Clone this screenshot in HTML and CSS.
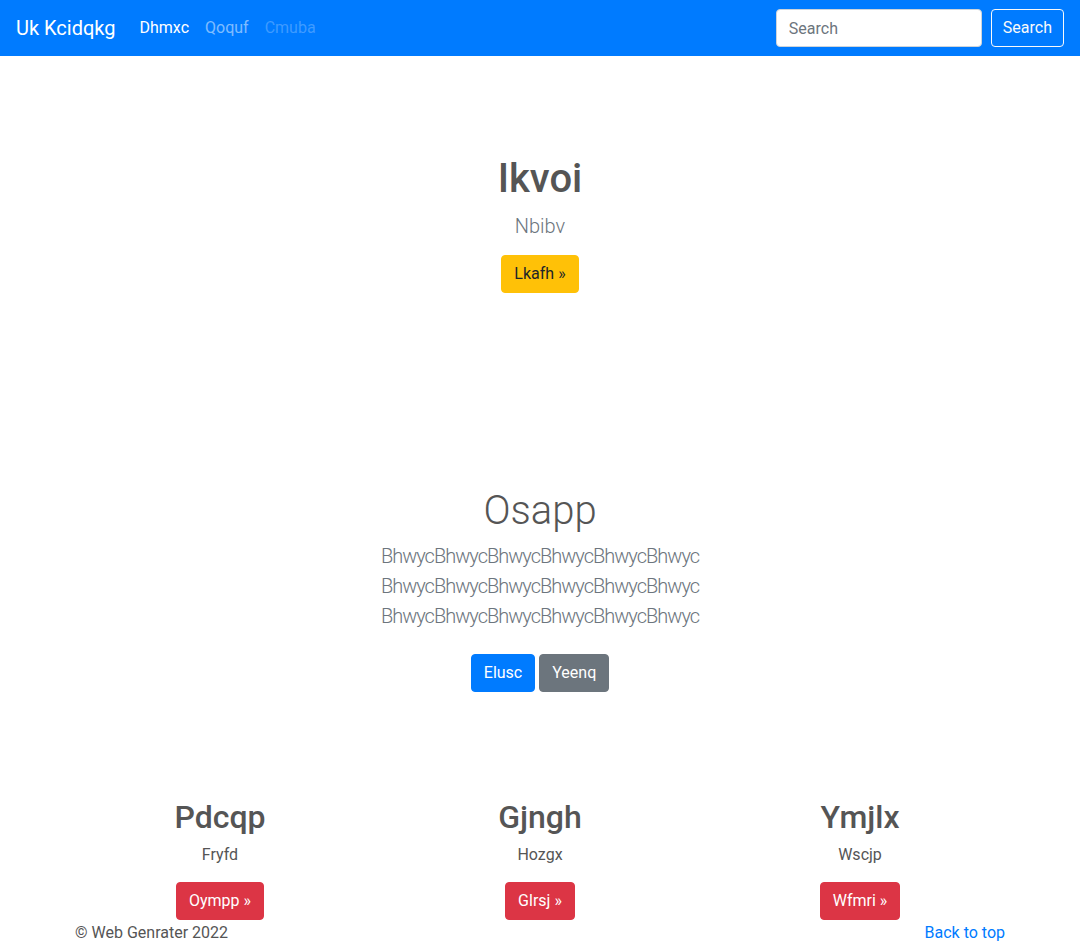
FILE: index.html
```html
<!DOCTYPE html>
<html lang="en">
<head>
<meta charset="utf-8">
<title>Uk Kcidqkg</title>
<link rel="stylesheet" href="styles.css">
</head>
<body>
<nav class="navbar">
  <a class="brand" href="#">Uk Kcidqkg</a>
  <ul class="nav">
    <li><a class="nav-link active" href="#">Dhmxc</a></li>
    <li><a class="nav-link" href="#">Qoquf</a></li>
    <li><a class="nav-link disabled" href="#">Cmuba</a></li>
  </ul>
  <form class="search">
    <input class="search-input" type="text" placeholder="Search">
    <button class="btn btn-outline-light" type="button">Search</button>
  </form>
</nav>

<main>
  <section class="hero">
    <h1 class="hero-title">Ikvoi</h1>
    <p class="lead">Nbibv</p>
    <a class="btn btn-warning" href="#">Lkafh »</a>
  </section>

  <section class="intro">
    <h1 class="intro-title">Osapp</h1>
    <p class="lead intro-lead">BhwycBhwycBhwycBhwycBhwycBhwyc<br>BhwycBhwycBhwycBhwycBhwycBhwyc<br>BhwycBhwycBhwycBhwycBhwycBhwyc</p>
    <div class="btn-row">
      <a class="btn btn-primary" href="#">Elusc</a>
      <a class="btn btn-secondary" href="#">Yeenq</a>
    </div>
  </section>

  <section class="container cols">
    <div class="col">
      <h2>Pdcqp</h2>
      <p>Fryfd</p>
      <a class="btn btn-danger" href="#">Oympp »</a>
    </div>
    <div class="col">
      <h2>Gjngh</h2>
      <p>Hozgx</p>
      <a class="btn btn-danger" href="#">Glrsj »</a>
    </div>
    <div class="col">
      <h2>Ymjlx</h2>
      <p>Wscjp</p>
      <a class="btn btn-danger" href="#">Wfmri »</a>
    </div>
  </section>
</main>

<footer class="container footer">
  <p>© Web Genrater 2022</p>
  <a href="#">Back to top</a>
</footer>
</body>
</html>
```

FILE: styles.css
```css
* { box-sizing: border-box; }

body {
  margin: 0;
  font-family: Roboto, "Liberation Sans", sans-serif;
  font-size: 16px;
  line-height: 1.5;
  color: #555;
  background: #fff;
}

a { text-decoration: none; }

.navbar {
  height: 56px;
  background: #007bff;
  display: flex;
  align-items: center;
  padding: 0 16px;
}

.brand {
  color: #fff;
  font-size: 20px;
  line-height: 30px;
  margin-right: 16px;
}

.nav {
  list-style: none;
  margin: 0;
  padding: 0;
  display: flex;
  flex: 1;
}

.nav-link {
  display: block;
  padding: 8px;
  color: rgba(255, 255, 255, 0.5);
}
.nav-link.active { color: #fff; }
.nav-link.disabled { color: rgba(255, 255, 255, 0.25); }

.search {
  display: flex;
  align-items: center;
  gap: 9px;
}

.search-input {
  width: 206px;
  height: 38px;
  padding: 6px 12px;
  font: inherit;
  color: #495057;
  border: 1px solid #ced4da;
  border-radius: 4px;
  background: #fff;
}
.search-input::placeholder { color: #6c757d; }

.search .btn { padding: 6px 11px; }

.btn {
  display: inline-block;
  padding: 6px 12px;
  font: inherit;
  font-size: 16px;
  line-height: 24px;
  border: 1px solid transparent;
  border-radius: 4px;
  cursor: pointer;
  text-align: center;
}

.btn-outline-light { color: #f8f9fa; border-color: #f8f9fa; background: transparent; }
.btn-warning { color: #212529; background: #ffc107; border-color: #ffc107; }
.btn-primary { color: #fff; background: #007bff; border-color: #007bff; }
.btn-secondary { color: #fff; background: #6c757d; border-color: #6c757d; }
.btn-danger { color: #fff; background: #dc3545; border-color: #dc3545; }

.hero, .intro { text-align: center; }

.hero { padding-top: 99px; }

h1, h2 {
  margin: 0 0 8px;
  line-height: 1.2;
  color: #555;
}

.hero-title {
  font-size: 40px;
  font-weight: 500;
}

.lead {
  font-size: 20px;
  font-weight: 300;
  color: #6c757d;
  margin: 0 0 14px;
}

.intro { padding-top: 194px; }

.intro-title {
  font-size: 40px;
  font-weight: 300;
  margin-bottom: 6px;
}

.intro-lead {
  margin-bottom: 23px;
  letter-spacing: -1px;
}

.btn-row {
  display: flex;
  justify-content: center;
  gap: 4px;
}

.container {
  width: 960px;
  margin: 0 auto;
  padding: 0 15px;
}

.cols {
  display: grid;
  grid-template-columns: repeat(3, 1fr);
  padding: 106px 0 0;
  text-align: center;
}

.col h2 {
  font-size: 32px;
  font-weight: 500;
  margin-bottom: 7px;
}

.col p { margin: 0 0 15px; }

.footer {
  display: flex;
  justify-content: space-between;
  align-items: flex-start;
  margin-top: 1px;
}
.footer p { margin: 0; }
.footer a { color: #007bff; }
```
